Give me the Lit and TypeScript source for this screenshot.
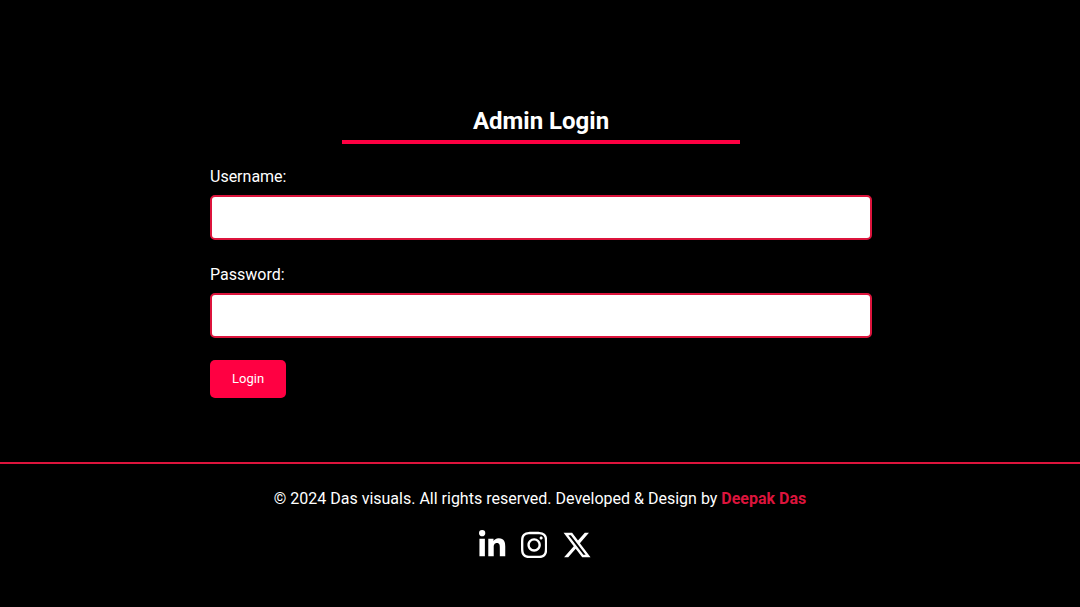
import { LitElement, html, css } from "lit";
import { customElement } from "lit/decorators.js";

const socials = [
  {
    name: "LinkedIn",
    width: 448,
    path: "M100.28 448H7.4V148.9h92.88zM53.79 108.1C24.09 108.1 0 83.5 0 53.8a53.79 53.79 0 0 1 107.58 0c0 29.7-24.1 54.3-53.79 54.3zM447.9 448h-92.68V302.4c0-34.7-.7-79.2-48.29-79.2-48.29 0-55.69 37.7-55.69 76.7V448h-92.78V148.9h89.08v40.8h1.3c12.4-23.5 42.69-48.3 87.88-48.3 94 0 111.28 61.9 111.28 142.3V448z",
  },
  {
    name: "Instagram",
    width: 448,
    path: "M224.1 141c-63.6 0-114.9 51.3-114.9 114.9s51.3 114.9 114.9 114.9S339 319.5 339 255.9 287.7 141 224.1 141zm0 189.6c-41.1 0-74.7-33.5-74.7-74.7s33.5-74.7 74.7-74.7 74.7 33.5 74.7 74.7-33.6 74.7-74.7 74.7zm146.4-194.3c0 14.9-12 26.8-26.8 26.8-14.9 0-26.8-12-26.8-26.8s12-26.8 26.8-26.8 26.8 12 26.8 26.8zm76.1 27.2c-1.7-35.9-9.9-67.7-36.2-93.9-26.2-26.2-58-34.4-93.9-36.2-37-2.1-147.9-2.1-184.9 0-35.8 1.7-67.6 9.9-93.9 36.1s-34.4 58-36.2 93.9c-2.1 37-2.1 147.9 0 184.9 1.7 35.9 9.9 67.7 36.2 93.9s58 34.4 93.9 36.2c37 2.1 147.9 2.1 184.9 0 35.9-1.7 67.7-9.9 93.9-36.2 26.2-26.2 34.4-58 36.2-93.9 2.1-37 2.1-147.8 0-184.8zM398.8 388c-7.8 19.6-22.9 34.7-42.6 42.6-29.5 11.7-99.5 9-132.1 9s-102.7 2.6-132.1-9c-19.6-7.8-34.7-22.9-42.6-42.6-11.7-29.5-9-99.5-9-132.1s-2.6-102.7 9-132.1c7.8-19.6 22.9-34.7 42.6-42.6 29.5-11.7 99.5-9 132.1-9s102.7-2.6 132.1 9c19.6 7.8 34.7 22.9 42.6 42.6 11.7 29.5 9 99.5 9 132.1s2.7 102.7-9 132.1z",
  },
  {
    name: "X",
    width: 512,
    path: "M389.2 48h70.6L305.6 224.2 487 464H345L233.7 318.6 106.5 464H35.8L200.7 275.5 26.8 48H172.4L272.9 180.9 389.2 48zM364.4 421.8h39.1L151.1 88h-42L364.4 421.8z",
  },
];

@customElement("login-form")
class LoginForm extends LitElement {
  static styles = css`
    :host {
      display: block;
    }
    .title {
      margin: 0;
      font-size: 24px;
      line-height: 28px;
      font-weight: 700;
      text-align: center;
    }
    .rule {
      width: 60%;
      height: 4px;
      margin: 5px auto 23px;
      background: #ff0042;
    }
    .field {
      display: flex;
      flex-direction: column;
      gap: 8px;
    }
    .field + .field {
      margin-top: 25px;
    }
    .label {
      font-size: 16px;
      line-height: 20px;
    }
    .input {
      box-sizing: border-box;
      width: 100%;
      height: 45px;
      padding: 10px;
      border: 2px solid #dc143c;
      border-radius: 5px;
      background: #fff;
      color: #000;
      font: inherit;
      font-size: 16px;
    }
    .submit {
      display: block;
      margin-top: 22px;
      padding: 11px 22px;
      border: 0;
      border-radius: 5px;
      background: #ff0042;
      color: #fff;
      font: 13px/16px Roboto, sans-serif;
      cursor: pointer;
    }
  `;

  render() {
    return html`
      <h2 class="title">Admin Login</h2>
      <div class="rule"></div>
      <form @submit=${(e: Event) => e.preventDefault()}>
        <div class="field">
          <label class="label" for="username">Username:</label>
          <input class="input" id="username" type="text" autocomplete="username" />
        </div>
        <div class="field">
          <label class="label" for="password">Password:</label>
          <input class="input" id="password" type="password" autocomplete="current-password" />
        </div>
        <button class="submit" type="submit">Login</button>
      </form>
    `;
  }
}

@customElement("site-footer")
class SiteFooter extends LitElement {
  static styles = css`
    :host {
      display: block;
      border-top: 2px solid #dc143c;
      padding: 25px 0;
      text-align: center;
    }
    .copy {
      margin: 0 0 21px;
      font-size: 16px;
      line-height: 20px;
    }
    .author {
      color: #dc143c;
      font-weight: 700;
      text-decoration: none;
    }
    .socials {
      display: flex;
      justify-content: center;
      gap: 15px;
      padding-right: 9px;
    }
    .social {
      display: block;
      color: #fff;
    }
    .icon {
      display: block;
      height: 30px;
      fill: currentColor;
    }
  `;

  render() {
    return html`
      <p class="copy">
        © 2024 Das visuals. All rights reserved. Developed &amp; Design by
        <a class="author" href="#">Deepak Das</a>
      </p>
      <div class="socials">
        ${socials.map(
          (s) => html`<a class="social" href="#" aria-label=${s.name}>
            <svg class="icon" viewBox="0 0 ${s.width} 512" aria-hidden="true"><path d=${s.path}></path></svg>
          </a>`
        )}
      </div>
    `;
  }
}

@customElement("app-root")
class AppRoot extends LitElement {
  static styles = css`
    :host {
      display: block;
      min-height: 100vh;
      background: #000;
      color: #fff;
      font-family: Roboto, sans-serif;
    }
    .main {
      padding: 107px 208px 64px 210px;
    }
  `;

  render() {
    return html`
      <main class="main"><login-form></login-form></main>
      <site-footer></site-footer>
    `;
  }
}
